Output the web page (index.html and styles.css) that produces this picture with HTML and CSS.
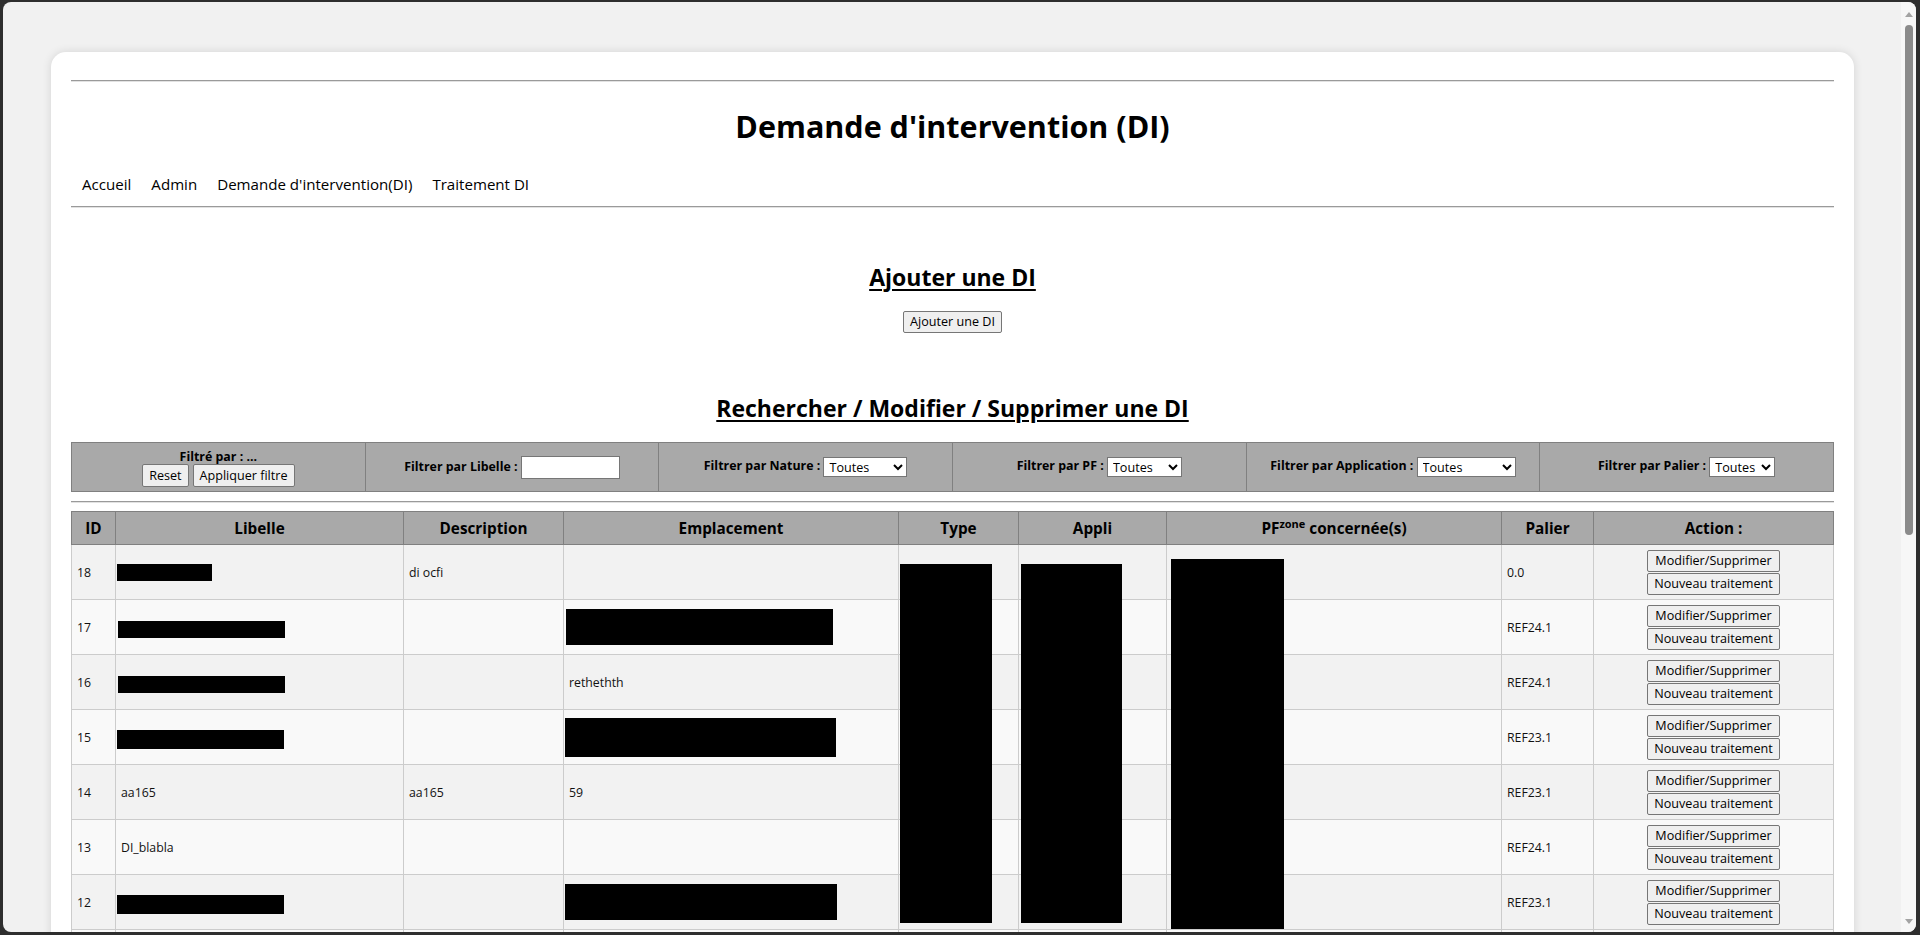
FILE: index.html
```html
<!DOCTYPE html>
<html lang="fr">
<head>
<meta charset="utf-8">
<title>Demande d'intervention (DI)</title>
<link rel="stylesheet" href="styles.css">
</head>
<body>
<div class="window">
  <div class="viewport">
    <div class="card">
      <hr class="rule rule-top">
      <h1 class="title">Demande d'intervention (DI)</h1>
      <nav class="menu">
        <a href="#">Accueil</a>
        <a href="#">Admin</a>
        <a href="#">Demande d'intervention(DI)</a>
        <a href="#">Traitement DI</a>
      </nav>
      <hr class="rule rule-nav">

      <h2 class="section-title add-title">Ajouter une DI</h2>
      <div class="center add-action"><button class="btn">Ajouter une DI</button></div>

      <h2 class="section-title search-title">Rechercher / Modifier / Supprimer une DI</h2>

      <table class="filters">
        <tr>
          <td class="f-first">
            <div class="f-label">Filtré par : ...</div>
            <div class="f-buttons"><button class="btn">Reset</button> <button class="btn">Appliquer filtre</button></div>
          </td>
          <td><span class="f-label">Filtrer par Libelle :</span> <input class="f-input" type="text"></td>
          <td><span class="f-label">Filtrer par Nature :</span> <select class="f-select w-nature"><option>Toutes</option></select></td>
          <td><span class="f-label">Filtrer par PF :</span> <select class="f-select w-pf"><option>Toutes</option></select></td>
          <td><span class="f-label">Filtrer par Application :</span> <select class="f-select w-app"><option>Toutes</option></select></td>
          <td><span class="f-label">Filtrer par Palier :</span> <select class="f-select w-palier"><option>Toutes</option></select></td>
        </tr>
      </table>

      <hr class="rule rule-table">

      <div class="grid-wrap">
        <table class="grid">
          <colgroup>
            <col class="c-id"><col class="c-lib"><col class="c-desc"><col class="c-emp"><col class="c-type"><col class="c-app"><col class="c-pf"><col class="c-pal"><col class="c-act">
          </colgroup>
          <thead>
            <tr>
              <th>ID</th><th>Libelle</th><th>Description</th><th>Emplacement</th><th>Type</th><th>Appli</th><th>PF<sup>zone</sup> concernée(s)</th><th>Palier</th><th>Action :</th>
            </tr>
          </thead>
          <tbody>
            <tr>
              <td>18</td><td><span class="mask m-lib-s"></span></td><td>di ocfi</td><td></td><td></td><td></td><td></td><td>0.0</td>
              <td class="act"><button class="btn">Modifier/Supprimer</button><button class="btn">Nouveau traitement</button></td>
            </tr>
            <tr>
              <td>17</td><td><span class="mask m-lib"></span></td><td></td><td><span class="mask m-emp"></span></td><td></td><td></td><td></td><td>REF24.1</td>
              <td class="act"><button class="btn">Modifier/Supprimer</button><button class="btn">Nouveau traitement</button></td>
            </tr>
            <tr>
              <td>16</td><td><span class="mask m-lib"></span></td><td></td><td>rethethth</td><td></td><td></td><td></td><td>REF24.1</td>
              <td class="act"><button class="btn">Modifier/Supprimer</button><button class="btn">Nouveau traitement</button></td>
            </tr>
            <tr>
              <td>15</td><td><span class="mask m-lib m-tall"></span></td><td></td><td><span class="mask m-emp m-emp-tall"></span></td><td></td><td></td><td></td><td>REF23.1</td>
              <td class="act"><button class="btn">Modifier/Supprimer</button><button class="btn">Nouveau traitement</button></td>
            </tr>
            <tr>
              <td>14</td><td>aa165</td><td>aa165</td><td>59</td><td></td><td></td><td></td><td>REF23.1</td>
              <td class="act"><button class="btn">Modifier/Supprimer</button><button class="btn">Nouveau traitement</button></td>
            </tr>
            <tr>
              <td>13</td><td>DI_blabla</td><td></td><td></td><td></td><td></td><td></td><td>REF24.1</td>
              <td class="act"><button class="btn">Modifier/Supprimer</button><button class="btn">Nouveau traitement</button></td>
            </tr>
            <tr>
              <td>12</td><td><span class="mask m-lib m-tall"></span></td><td></td><td><span class="mask m-emp m-emp-wide"></span></td><td></td><td></td><td></td><td>REF23.1</td>
              <td class="act"><button class="btn">Modifier/Supprimer</button><button class="btn">Nouveau traitement</button></td>
            </tr>
            <tr class="row-partial">
              <td></td><td></td><td></td><td></td><td></td><td></td><td></td><td></td><td></td>
            </tr>
          </tbody>
        </table>
        <div class="redact r-type"></div>
        <div class="redact r-app"></div>
        <div class="redact r-pf"></div>
      </div>
    </div>
  </div>
  <div class="scrollbar">
    <span class="arrow-up"></span>
    <span class="thumb"></span>
    <span class="spacer"></span>
    <span class="arrow-down"></span>
  </div>
</div>
</body>
</html>
```

FILE: styles.css
```css
* { box-sizing: border-box; }

html, body {
  margin: 0;
  padding: 0;
  height: 100%;
}

body {
  background: #2e2e2e;
  font-family: "Open Sans", "Noto Sans", sans-serif;
  color: #000;
  overflow: hidden;
}

.window {
  margin: 2px 4px 3px 3px;
  height: 930px;
  border-radius: 8px;
  background: #f1f1f1;
  display: flex;
  overflow: hidden;
}

.viewport {
  flex: 1;
  padding: 50px 47px 0 48px;
  overflow: hidden;
}

.card {
  background: #fff;
  border-radius: 15px 15px 0 0;
  box-shadow: 0 0 10px rgba(0, 0, 0, 0.12);
  padding: 20px 20px 40px;
}

/* rules */
.rule {
  height: 0;
  margin: 0;
  border: 0;
  border-top: 1px solid #9a9a9a;
  border-bottom: 1px solid #e2e2e2;
}
.rule-top { margin-top: 8px; }
.rule-nav { margin-top: 11px; }
.rule-table { margin-top: 9px; }

.title {
  margin: 26px 0 0;
  text-align: center;
  font-size: 30.5px;
  line-height: 37px;
  font-weight: 700;
}

.menu {
  margin-top: 29px;
  display: flex;
  line-height: 21px;
  font-size: 15.1px;
}
.menu a {
  color: #000;
  text-decoration: none;
  padding: 0 10px 0 10px;
}
.menu a:first-child { padding-left: 11px; }

.section-title {
  margin: 0;
  text-align: center;
  font-size: 23px;
  line-height: 28px;
  font-weight: 700;
  text-decoration: underline;
  text-underline-offset: 3px;
  text-decoration-thickness: 2px;
}
.add-title { margin-top: 55px; }
.search-title { margin-top: 61px; }

.center { text-align: center; }
.add-action { margin-top: 20px; height: 22px; }

.btn {
  font-family: "Open Sans", "Noto Sans", sans-serif;
  font-size: 12.6px;
  line-height: 18px;
  height: 22px;
  padding: 1px 6px;
  background: #efefef;
  color: #000;
  border: 1px solid #767676;
  border-radius: 2px;
  margin: 0;
  vertical-align: top;
}

/* filters */
.filters {
  margin-top: 20px;
  width: 100%;
  table-layout: fixed;
  border-collapse: collapse;
  background: #a9a9a9;
  border: 1px solid #808080;
}
.filters td {
  border: 1px solid #808080;
  height: 49px;
  text-align: center;
  vertical-align: middle;
  padding: 0;
  font-size: 12.4px;
}
.filters td.f-first { padding: 4px 0 2px; }
.f-label { font-weight: 700; line-height: 15px; }
.f-buttons { margin-top: 0; display: flex; justify-content: center; gap: 4px; }
.f-buttons .btn { height: 23px; }
.f-input {
  width: 99px;
  height: 23px;
  border: 1px solid #767676;
  background: #fff;
  vertical-align: middle;
  padding: 0 2px;
}
.f-select {
  height: 20px;
  font-family: "Open Sans", "Noto Sans", sans-serif;
  font-size: 12.6px;
  background: #fff;
  border: 1px solid #767676;
  border-radius: 0;
  vertical-align: middle;
  padding: 0 0 0 1px;
}
.w-nature { width: 84px; }
.w-pf { width: 75px; }
.w-app { width: 99px; }
.w-palier { width: 66px; }

/* data grid */
.grid-wrap {
  position: relative;
  margin-top: 8px;
}
.grid {
  width: 100%;
  table-layout: fixed;
  border-collapse: collapse;
}
.c-id { width: 44px; }
.c-lib { width: 288px; }
.c-desc { width: 160px; }
.c-emp { width: 335px; }
.c-type { width: 120px; }
.c-app { width: 148px; }
.c-pf { width: 335px; }
.c-pal { width: 92px; }
.c-act { width: 240px; }

.grid th {
  background: #a9a9a9;
  border: 1px solid #808080;
  height: 33px;
  font-size: 15.3px;
  font-weight: 700;
  padding: 0 4px;
  text-align: center;
}
.grid th sup {
  font-size: 11px;
  line-height: 0;
}
.grid td {
  border: 1px solid #cccccc;
  height: 55px;
  padding: 0 4px 0 5px;
  font-size: 12.3px;
  vertical-align: middle;
  color: #111;
}
.grid tbody tr:nth-child(odd) td { background: #f2f2f2; }
.grid tbody tr:nth-child(even) td { background: #f9f9f9; }

.grid td.act {
  text-align: center;
  padding: 4px 0;
}
.grid td.act .btn {
  display: block;
  margin: 0 auto;
  width: 133px;
  padding: 1px 0;
}
.grid td.act .btn + .btn { margin-top: 1px; }

.mask {
  display: inline-block;
  background: #000;
  vertical-align: middle;
  margin-left: -3px;
}
.m-lib-s { width: 95px; height: 17px; margin-left: -4px; }
.m-lib { width: 167px; height: 17px; margin-top: 4px; }
.m-tall { height: 19px; margin-left: -4px; }
.m-emp { width: 267px; height: 36px; margin-left: -3px; }
.m-emp-tall { width: 271px; height: 39px; margin-left: -4px; }
.m-emp-wide { width: 272px; margin-left: -4px; }

.redact {
  position: absolute;
  background: #000;
}
.r-type { left: 829px; top: 53px; width: 92px; height: 359px; }
.r-app { left: 950px; top: 53px; width: 101px; height: 359px; }
.r-pf { left: 1100px; top: 48px; width: 113px; height: 370px; }

/* scrollbar */
.scrollbar {
  width: 15px;
  background: #f7f7f7;
  display: flex;
  flex-direction: column;
  align-items: center;
  padding-top: 10px;
  padding-bottom: 8px;
}
.arrow-up {
  width: 0;
  height: 0;
  border-left: 4px solid transparent;
  border-right: 4px solid transparent;
  border-bottom: 5px solid #a3a3a3;
}
.thumb {
  margin-top: 8px;
  width: 8px;
  height: 510px;
  border-radius: 4px;
  background: #8b8b8b;
}
.spacer { flex: 1; }
.arrow-down {
  width: 0;
  height: 0;
  border-left: 4px solid transparent;
  border-right: 4px solid transparent;
  border-top: 5px solid #a3a3a3;
}
```
